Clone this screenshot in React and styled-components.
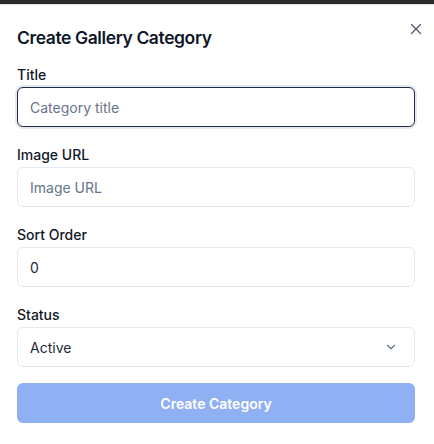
import styled, { createGlobalStyle } from 'styled-components';
import { X, ChevronDown } from 'lucide-react';

const GlobalStyle = createGlobalStyle`
  body {
    margin: 0;
    background: #ffffff;
    font-family: Inter, "Noto Sans", sans-serif;
    color: #0f172a;
  }
`;

export default function App() {
  return (
    <>
      <GlobalStyle />
      <TopBar />
      <Dialog>
        <Header>
          <Heading>Create Gallery Category</Heading>
          <CloseButton aria-label="Close">
            <X size={18} strokeWidth={1.6} />
          </CloseButton>
        </Header>
        <Form onSubmit={(e) => e.preventDefault()}>
          <Field>
            <Label>Title</Label>
            <Input $focused autoFocus placeholder="Category title" />
          </Field>
          <Field>
            <Label>Image URL</Label>
            <Input placeholder="Image URL" />
          </Field>
          <Field>
            <Label>Sort Order</Label>
            <Input defaultValue="0" />
          </Field>
          <Field>
            <Label>Status</Label>
            <SelectBox type="button">
              <span>Active</span>
              <ChevronDown size={14} strokeWidth={2} />
            </SelectBox>
          </Field>
          <SubmitButton type="submit" disabled>
            Create Category
          </SubmitButton>
        </Form>
      </Dialog>
    </>
  );
}

const TopBar = styled.div`
  height: 4px;
  background: #2b2b2b;
  border-bottom: 1px solid #dbe4ef;
`;

const Dialog = styled.div`
  padding: 19px 19px 0 17px;
`;

const Header = styled.div`
  display: flex;
  justify-content: space-between;
  align-items: flex-start;
`;

const Heading = styled.h2`
  margin: 0;
  font-size: 17.5px;
  line-height: 28px;
  font-weight: 600;
  letter-spacing: -0.4px;
  color: #0f172a;
`;

const CloseButton = styled.button`
  display: flex;
  padding: 0;
  margin: -4px -10px 0 0;
  border: none;
  background: none;
  color: #4b5563;
  cursor: pointer;
`;

const Form = styled.form`
  display: flex;
  flex-direction: column;
  gap: 20px;
  margin-top: 15px;
`;

const Field = styled.div`
  display: flex;
  flex-direction: column;
  gap: 4px;
`;

const Label = styled.label`
  font-size: 14px;
  line-height: 16px;
  font-weight: 500;
  color: #111827;
`;

const Input = styled.input`
  box-sizing: border-box;
  height: 40px;
  width: 100%;
  padding: 0 12px;
  border: 1px solid ${({ $focused }) => ($focused ? '#1e2a4a' : '#e2e8f0')};
  border-radius: 6px;
  box-shadow: ${({ $focused }) => ($focused ? '0 0 0 2px #e5e7eb' : 'none')};
  font-family: inherit;
  font-size: 14px;
  color: #1e293b;
  caret-color: #111827;
  background: #ffffff;
  outline: none;

  &::placeholder {
    color: #64748b;
  }
`;

const SelectBox = styled.button`
  box-sizing: border-box;
  display: flex;
  align-items: center;
  justify-content: space-between;
  height: 40px;
  width: 100%;
  padding: 0 16px 0 12px;
  border: 1px solid #e2e8f0;
  border-radius: 6px;
  background: #ffffff;
  font-family: inherit;
  font-size: 14px;
  color: #1e293b;
  cursor: pointer;

  svg {
    color: #64748b;
  }
`;

const SubmitButton = styled.button`
  height: 40px;
  margin-top: -4px;
  border: none;
  border-radius: 6px;
  background: #8fb0f3;
  color: #ffffff;
  font-family: inherit;
  font-size: 14px;
  font-weight: 600;
  cursor: not-allowed;
`;
